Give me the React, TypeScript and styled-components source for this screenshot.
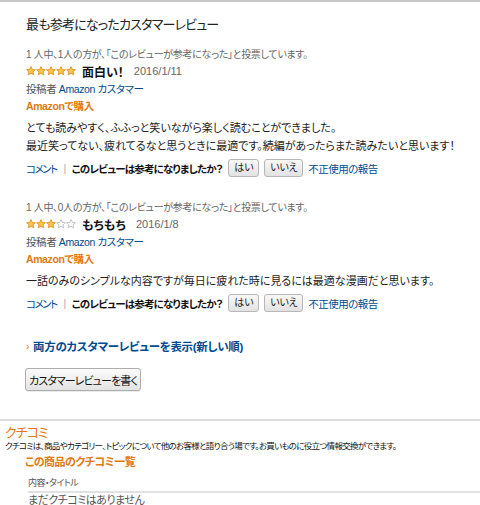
import React from "react";
import styled, { createGlobalStyle } from "styled-components";

const Global = createGlobalStyle`
  html, body { margin: 0; padding: 0; background: #fff; }
  body {
    font-family: "Liberation Sans", "Noto Sans CJK JP", sans-serif;
    font-feature-settings: "palt";
    color: #111;
  }
`;

const Page = styled.div`
  width: 480px;
  border-top: 2px solid #c8c8c8;
  box-sizing: border-box;
`;

const Main = styled.section`
  padding: 13px 0 0 26px;
  display: flex;
  flex-direction: column;
`;

const Title = styled.h2`
  margin: 0;
  font-size: 13px;
  letter-spacing: -0.8px;
  line-height: 20px;
  font-weight: normal;
  color: #222;
`;

const Review = styled.article<{ $first?: boolean }>`
  display: flex;
  flex-direction: column;
  margin-top: ${(p) => (p.$first ? "12px" : "22px")};
`;

const Meta = styled.div`
  font-size: 10px;
  letter-spacing: -0.3px;
  line-height: 16px;
  color: #666;
`;

const StarRow = styled.div`
  display: flex;
  align-items: center;
  height: 16px;
  gap: 6px;
`;

const Stars = styled.span`
  display: inline-flex;
`;

const Headline = styled.b`
  font-size: 12px;
  color: #111;
  font-weight: bold;
`;

const DateText = styled.span`
  font-size: 11px;
  color: #666;
  margin-left: 4px;
`;

const Author = styled.div`
  margin-top: 2px;
  font-size: 10.5px;
  letter-spacing: -0.4px;
  line-height: 16px;
  color: #555;
`;

const Link = styled.a<{ $tight?: boolean }>`
  color: #004b91;
  text-decoration: none;
  letter-spacing: ${(p) => (p.$tight ? "-1.5px" : "inherit")};
`;

const Purchase = styled.div`
  margin-top: 1px;
  font-size: 10.5px;
  letter-spacing: -0.4px;
  line-height: 16px;
  font-weight: bold;
  color: #e47911;
`;

const Body = styled.p`
  margin: 5px 0 0;
  font-size: 11px;
  line-height: 18px;
  color: #222;
`;

const Actions = styled.div`
  margin-top: 3px;
  display: flex;
  align-items: center;
  height: 20px;
  font-size: 10.5px;
  letter-spacing: -0.5px;
`;

const Sep = styled.span`
  color: #aaa;
  margin: 0 6px 0 7px;
`;

const Question = styled.b`
  color: #111;
  font-size: 10.5px;
  letter-spacing: -0.8px;
  margin-right: 6px;
`;

const VoteButton = styled.button`
  font-family: inherit;
  font-feature-settings: "palt";
  font-size: 10px;
  letter-spacing: -0.3px;
  height: 18px;
  padding: 0 5px;
  margin-right: 5px;
  border: 1px solid #b7b7b7;
  border-radius: 3px;
  background: linear-gradient(#f8f8f8, #e2e2e2);
  color: #222;
  line-height: 16px;
  cursor: pointer;
`;

const ShowAll = styled.a`
  margin-top: 26px;
  font-size: 11.5px;
  letter-spacing: -0.3px;
  line-height: 16px;
  font-weight: bold;
  color: #004b91;
  text-decoration: none;
  display: flex;
  align-items: center;
`;

const Arrow = styled.span`
  color: #e47911;
  font-size: 10px;
  margin-right: 4px;
  font-weight: normal;
`;

const WriteButton = styled.button`
  margin-top: 13px;
  align-self: flex-start;
  width: 116px;
  height: 23px;
  margin-left: -1px;
  white-space: nowrap;
  font-family: inherit;
  font-feature-settings: "palt";
  font-size: 11px;
  letter-spacing: -0.9px;
  color: #111;
  border: 1px solid #adadad;
  border-radius: 3px;
  background: linear-gradient(#fbfbfb, #e3e3e3);
  box-shadow: 0 1px 0 rgba(0, 0, 0, 0.08);
  padding: 0;
  cursor: pointer;
`;

const Kuchikomi = styled.section`
  margin-top: 28px;
  border-top: 2px solid #ddd;
  padding: 3px 0 0 5px;
  display: flex;
  flex-direction: column;
`;

const KTitle = styled.h3`
  margin: 0;
  font-size: 13px;
  letter-spacing: -1px;
  line-height: 17px;
  font-weight: normal;
  color: #e47911;
`;

const KDesc = styled.div`
  font-size: 8.5px;
  letter-spacing: -0.7px;
  line-height: 11px;
  color: #111;
  white-space: nowrap;
`;

const KSub = styled.h4`
  margin: 2px 0 0 20px;
  font-size: 11px;
  letter-spacing: -0.5px;
  line-height: 16px;
  font-weight: bold;
  color: #e47911;
`;

const KTable = styled.div`
  margin: 7px 0 0 23px;
  display: flex;
  flex-direction: column;
`;

const KHead = styled.div`
  font-size: 9px;
  letter-spacing: -0.5px;
  line-height: 12px;
  color: #555;
  padding-bottom: 2px;
  border-bottom: 2px solid #e2e2e2;
`;

const KEmpty = styled.div`
  font-size: 11px;
  letter-spacing: -0.5px;
  line-height: 14px;
  color: #555;
`;

const Star: React.FC<{ filled: boolean }> = ({ filled }) => (
  <svg width="10" height="10" viewBox="0 0 20 20">
    <path
      d="M10 1.2l2.6 5.7 6.2.6-4.7 4.1 1.4 6.1L10 14.6l-5.5 3.1 1.4-6.1L1.2 7.5l6.2-.6z"
      fill={filled ? "#f9c44d" : "#ffffff"}
      stroke={filled ? "#de8a12" : "#b5b5b5"}
      strokeWidth="1.6"
      strokeLinejoin="round"
    />
  </svg>
);

type ReviewData = {
  helpful: string;
  rating: number;
  title: string;
  date: string;
  body: string[];
};

const reviews: ReviewData[] = [
  {
    helpful: "1 人中、1人の方が、「このレビューが参考になった」と投票しています。",
    rating: 5,
    title: "面白い！",
    date: "2016/1/11",
    body: [
      "とても読みやすく、ふふっと笑いながら楽しく読むことができました。",
      "最近笑ってない、疲れてるなと思うときに最適です。続編があったらまた読みたいと思います！",
    ],
  },
  {
    helpful: "1 人中、0人の方が、「このレビューが参考になった」と投票しています。",
    rating: 3,
    title: "もちもち",
    date: "2016/1/8",
    body: ["一話のみのシンプルな内容ですが毎日に疲れた時に見るには最適な漫画だと思います。"],
  },
];

export default function App() {
  return (
    <Page>
      <Global />
      <Main>
        <Title>最も参考になったカスタマーレビュー</Title>
        {reviews.map((r, i) => (
          <Review key={i} $first={i === 0}>
            <Meta>{r.helpful}</Meta>
            <StarRow>
              <Stars>
                {[0, 1, 2, 3, 4].map((n) => (
                  <Star key={n} filled={n < r.rating} />
                ))}
              </Stars>
              <Headline>{r.title}</Headline>
              <DateText>{r.date}</DateText>
            </StarRow>
            <Author>
              投稿者 <Link href="#">Amazon カスタマー</Link>
            </Author>
            <Purchase>Amazonで購入</Purchase>
            <Body>
              {r.body.map((line, j) => (
                <React.Fragment key={j}>
                  {line}
                  {j < r.body.length - 1 && <br />}
                </React.Fragment>
              ))}
            </Body>
            <Actions>
              <Link href="#" $tight>
                コメント
              </Link>
              <Sep>|</Sep>
              <Question>このレビューは参考になりましたか？</Question>
              <VoteButton>はい</VoteButton>
              <VoteButton>いいえ</VoteButton>
              <Link href="#">不正使用の報告</Link>
            </Actions>
          </Review>
        ))}
        <ShowAll href="#">
          <Arrow>›</Arrow>両方のカスタマーレビューを表示(新しい順)
        </ShowAll>
        <WriteButton>カスタマーレビューを書く</WriteButton>
      </Main>
      <Kuchikomi>
        <KTitle>クチコミ</KTitle>
        <KDesc>
          クチコミは、商品やカテゴリー、トピックについて他のお客様と語り合う場です。お買いものに役立つ情報交換ができます。
        </KDesc>
        <KSub>この商品のクチコミ一覧</KSub>
        <KTable>
          <KHead>内容・タイトル</KHead>
          <KEmpty>まだクチコミはありません</KEmpty>
        </KTable>
      </Kuchikomi>
    </Page>
  );
}
